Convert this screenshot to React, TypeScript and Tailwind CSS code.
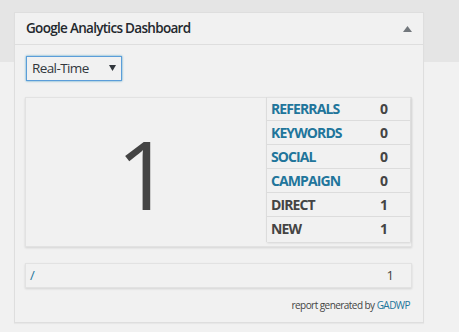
import React from "react";

const rows: { label: string; value: string; link: boolean }[] = [
  { label: "REFERRALS", value: "0", link: true },
  { label: "KEYWORDS", value: "0", link: true },
  { label: "SOCIAL", value: "0", link: true },
  { label: "CAMPAIGN", value: "0", link: true },
  { label: "DIRECT", value: "1", link: false },
  { label: "NEW", value: "1", link: false },
];

export default function App() {
  return (
    <div
      className="w-[459px] h-[332px] overflow-hidden bg-[linear-gradient(#e5e5e5_62px,#f1f1f1_62px)] pt-[12px] pl-[14px]"
      style={{ fontFamily: '"Open Sans", "Noto Sans", sans-serif' }}
    >
      <div className="w-[410px] h-[311px] bg-[#f1f1f1] border border-[#dedede] shadow-[0_1px_1px_rgba(0,0,0,0.04)] flex flex-col">
        <div className="h-[32px] border-b border-[#dedede] flex items-center justify-between pl-[11px] pr-[11px]">
          <span className="text-[13.5px] font-semibold text-[#23282d] tracking-[-0.7px] leading-none">
            Google Analytics Dashboard
          </span>
          <svg width="9" height="6" viewBox="0 0 9 6" className="mt-[1px]">
            <path d="M4.5 0 L9 6 L0 6 Z" fill="#72777c" />
          </svg>
        </div>
        <div className="flex flex-col pl-[10px] pr-[11px] pt-[11px]">
          <div className="ml-[1px] w-[96px] h-[25px] border border-[#5b9dd9] shadow-[0_0_2px_rgba(30,140,190,0.8)] bg-[#f1f1f1] flex items-center justify-between pl-[5px] pr-[5px]">
            <span className="text-[13.5px] text-[#32373c] tracking-[-0.6px] leading-none">Real-Time</span>
            <svg width="7" height="6" viewBox="0 0 7 6" className="mb-[2px]">
              <path d="M0 0 L7 0 L3.5 6 Z" fill="#32373c" />
            </svg>
          </div>
          <div className="mt-[16px] h-[150px] bg-[#f1f1f1] border border-[#e2e2e2] shadow-[0_1px_2px_rgba(0,0,0,0.12)] flex">
            <div className="flex-1 flex items-center justify-center">
              <span className="text-[96px] leading-none text-[#444] mt-[2px] mr-[4px]">1</span>
            </div>
            <div className="w-[144px] mr-[1px] mb-[4px] -mt-[1px] border-l border-[#dcdcdc] shadow-[1px_1px_2px_rgba(0,0,0,0.12)] flex flex-col">
              {rows.map((r, i) => (
                <div
                  key={r.label}
                  className={
                    "h-[24px] flex items-center pl-[4px] " +
                    (i < rows.length - 1 ? "border-b border-[#dcdcdc]" : "")
                  }
                >
                  <span
                    className={
                      "w-[109px] text-[14px] font-bold tracking-[-0.9px] leading-none " +
                      (r.link ? "text-[#21759b]" : "text-[#444]")
                    }
                  >
                    {r.label}
                  </span>
                  <span className="text-[14px] font-bold text-[#444] leading-none">{r.value}</span>
                </div>
              ))}
            </div>
          </div>
          <div className="mt-[16px] h-[25px] bg-[#f1f1f1] border border-[#e2e2e2] shadow-[0_1px_2px_rgba(0,0,0,0.12)] flex items-center justify-between pl-[4px] pr-[17px]">
            <span className="text-[13px] text-[#21759b] leading-none">/</span>
            <span className="text-[13px] text-[#444] leading-none">1</span>
          </div>
          <div className="mt-[12px] flex justify-end pr-[2px]">
            <span className="text-[10px] text-[#444] tracking-[-0.55px] leading-none">
              report generated by <span className="text-[#21759b]">GADWP</span>
            </span>
          </div>
        </div>
      </div>
    </div>
  );
}
